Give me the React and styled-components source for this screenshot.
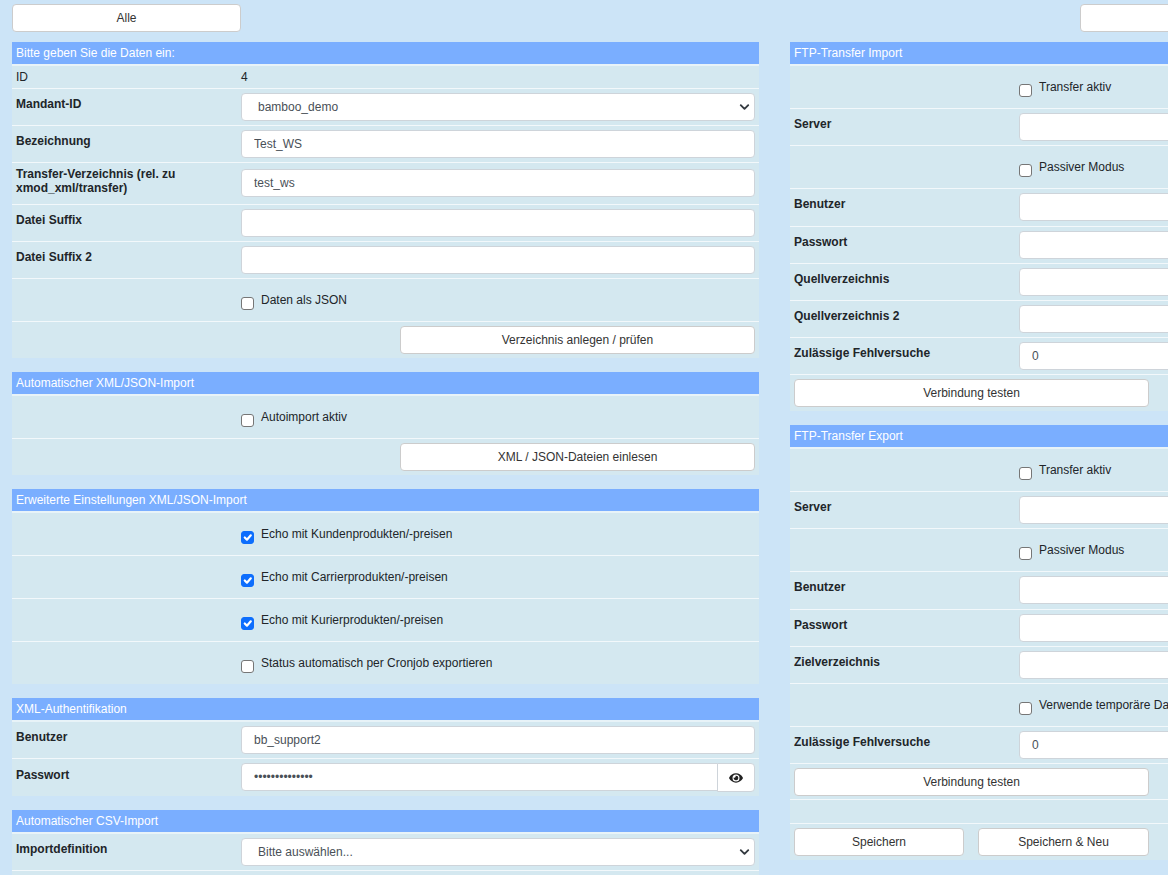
import React from "react";
import styled, { createGlobalStyle } from "styled-components";
import { FaEye } from "react-icons/fa";

const GlobalStyle = createGlobalStyle`
  html, body {
    margin: 0;
    height: 100%;
    overflow: hidden;
    background: #cce4f7;
  }
  * { box-sizing: border-box; }
  body {
    font-family: "Liberation Sans", Arial, sans-serif;
    font-size: 12px;
    color: #212529;
  }
`;

const Page = styled.div`
  width: 1549px;
  padding: 4px 12px 0;
`;

const TopBar = styled.div`
  display: flex;
  gap: 839px;
  margin-bottom: 10px;
`;

const Button = styled.button`
  height: 28px;
  width: ${(p) => p.$width || "355px"};
  background: #fff;
  border: 1px solid #ccc;
  border-radius: 4px;
  font: inherit;
  color: #333;
  padding: 0;
`;

const Columns = styled.div`
  display: grid;
  grid-template-columns: 747px 747px;
  gap: 31px;
  align-items: start;
`;

const Section = styled.section`
  margin-bottom: 14px;
`;

const SectionTitle = styled.div`
  height: 24px;
  line-height: 22px;
  padding-left: 4px;
  background: #7aaeff;
  border-bottom: 2px solid #e8f3f8;
  color: #fff;
  background-clip: padding-box;
`;

const Row = styled.div`
  display: grid;
  grid-template-columns: 229px 514px;
  background: #d4e8f0;
  border-bottom: 1px solid #f2f8fb;
  height: ${(p) => p.$height || "37px"};
  padding-top: ${(p) => p.$top ?? 4}px;

  &:last-child {
    border-bottom: 0;
  }
`;

const Label = styled.div`
  padding: ${(p) => p.$top ?? 4}px 4px 0;
  font-weight: ${(p) => (p.$plain ? 400 : 700)};
  line-height: 14px;
  color: #212529;
`;

const PlainValue = styled.div`
  padding-top: 4px;
  line-height: 14px;
`;

const TextInput = styled.input`
  width: 100%;
  height: 28px;
  margin-top: ${(p) => p.$offset || 0}px;
  padding: 0 12px;
  background: #fff;
  border: 1px solid #ced4da;
  border-radius: 4px;
  font: inherit;
  color: #495057;
  outline: none;
`;

const Select = styled.select`
  appearance: none;
  width: 100%;
  height: 28px;
  padding: 0 12px 0 16px;
  border: 1px solid #ced4da;
  border-radius: 4px;
  font: inherit;
  color: #495057;
  background: #fff url("data:image/svg+xml,%3csvg xmlns='http://www.w3.org/2000/svg' viewBox='0 0 16 16'%3e%3cpath fill='none' stroke='%23343a40' stroke-linecap='round' stroke-linejoin='round' stroke-width='3' d='m2 5 6 6 6-6'/%3e%3c/svg%3e") no-repeat right 4px center / 11px 10px;
`;

const InputGroup = styled.div`
  display: flex;
  ${TextInput} {
    border-radius: 4px 0 0 4px;
  }
`;

const EyeButton = styled.button`
  flex: 0 0 38px;
  height: 29px;
  margin-left: -1px;
  display: flex;
  align-items: center;
  justify-content: center;
  background: #fff;
  border: 1px solid #ced4da;
  border-radius: 0 4px 4px 0;
  color: #222;
  font-size: 14px;
  padding: 0;
`;

const CheckLine = styled.label`
  grid-column: 2;
  display: flex;
  align-items: flex-start;
  gap: 7px;
  white-space: nowrap;
  line-height: 14px;
`;

const Check = styled.input.attrs({ type: "checkbox" })`
  appearance: none;
  flex: none;
  width: 13px;
  height: 13px;
  margin: 4px 0 0;
  background: #fff;
  border: 1px solid #767676;
  border-radius: 3px;

  &:checked {
    border-color: #0d6efd;
    background: #0d6efd url("data:image/svg+xml,%3csvg xmlns='http://www.w3.org/2000/svg' viewBox='0 0 20 20'%3e%3cpath fill='none' stroke='%23fff' stroke-linecap='round' stroke-linejoin='round' stroke-width='4' d='m5 10 4 4 7-8'/%3e%3c/svg%3e") center / 100% 100% no-repeat;
  }
`;

const ActionRow = styled.div`
  display: flex;
  justify-content: ${(p) => p.$justify || "flex-start"};
  gap: 14px;
  background: #d4e8f0;
  border-bottom: 1px solid #f2f8fb;
  padding: 4px ${(p) => (p.$justify ? "4px" : "0")} 0 4px;
  height: 36px;

  &:last-child {
    border-bottom: 0;
  }
`;

const EmptyRow = styled.div`
  height: 24px;
  background: #d4e8f0;
  border-bottom: 1px solid #f2f8fb;
`;

function Field({ label, value = "", type = "text", height }) {
  return (
    <Row $height={height}>
      <Label>{label}</Label>
      <TextInput type={type} defaultValue={value} />
    </Row>
  );
}

function Dropdown({ label, value }) {
  return (
    <Row>
      <Label>{label}</Label>
      <Select defaultValue={value}>
        <option>{value}</option>
      </Select>
    </Row>
  );
}

function CheckRow({ text, checked, height = "43px" }) {
  return (
    <Row $height={height} $top={14}>
      <CheckLine>
        <Check defaultChecked={checked} />
        {text}
      </CheckLine>
    </Row>
  );
}

export default function App() {
  return (
    <Page>
      <GlobalStyle />
      <TopBar>
        <Button $width="229px">Alle</Button>
        <Button $width="229px" />
      </TopBar>
      <Columns>
        <div>
          <Section>
            <SectionTitle>Bitte geben Sie die Daten ein:</SectionTitle>
            <Row $height="23px" $top={0}>
              <Label $plain>ID</Label>
              <PlainValue>4</PlainValue>
            </Row>
            <Dropdown label="Mandant-ID" value="bamboo_demo" />
            <Field label="Bezeichnung" value="Test_WS" />
            <Row $height="42px" $top={0}>
              <Label>Transfer-Verzeichnis (rel. zu xmod_xml/transfer)</Label>
              <TextInput defaultValue="test_ws" $offset={6} />
            </Row>
            <Field label="Datei Suffix" />
            <Field label="Datei Suffix 2" />
            <CheckRow text="Daten als JSON" />
            <ActionRow $justify="flex-end">
              <Button>Verzeichnis anlegen / prüfen</Button>
            </ActionRow>
          </Section>
          <Section>
            <SectionTitle>Automatischer XML/JSON-Import</SectionTitle>
            <CheckRow text="Autoimport aktiv" />
            <ActionRow $justify="flex-end">
              <Button>XML / JSON-Dateien einlesen</Button>
            </ActionRow>
          </Section>
          <Section>
            <SectionTitle>Erweiterte Einstellungen XML/JSON-Import</SectionTitle>
            <CheckRow text="Echo mit Kundenprodukten/-preisen" checked />
            <CheckRow text="Echo mit Carrierprodukten/-preisen" checked />
            <CheckRow text="Echo mit Kurierprodukten/-preisen" checked />
            <CheckRow text="Status automatisch per Cronjob exportieren" height="42px" />
          </Section>
          <Section>
            <SectionTitle>XML-Authentifikation</SectionTitle>
            <Field label="Benutzer" value="bb_support2" />
            <Row>
              <Label $top={5}>Passwort</Label>
              <InputGroup>
                <TextInput type="password" defaultValue="bbsupport12345" />
                <EyeButton>
                  <FaEye />
                </EyeButton>
              </InputGroup>
            </Row>
          </Section>
          <Section>
            <SectionTitle>Automatischer CSV-Import</SectionTitle>
            <Dropdown label="Importdefinition" value="Bitte auswählen..." />
            <Row />
          </Section>
        </div>
        <div>
          <Section>
            <SectionTitle>FTP-Transfer Import</SectionTitle>
            <CheckRow text="Transfer aktiv" />
            <Field label="Server" />
            <CheckRow text="Passiver Modus" />
            <Field label="Benutzer" height="38px" />
            <Field label="Passwort" />
            <Field label="Quellverzeichnis" />
            <Field label="Quellverzeichnis 2" />
            <Field label="Zulässige Fehlversuche" value="0" />
            <ActionRow>
              <Button>Verbindung testen</Button>
            </ActionRow>
          </Section>
          <Section>
            <SectionTitle>FTP-Transfer Export</SectionTitle>
            <CheckRow text="Transfer aktiv" />
            <Field label="Server" />
            <CheckRow text="Passiver Modus" />
            <Field label="Benutzer" height="38px" />
            <Field label="Passwort" />
            <Field label="Zielverzeichnis" />
            <CheckRow text="Verwende temporäre Dateien" />
            <Field label="Zulässige Fehlversuche" value="0" />
            <ActionRow>
              <Button>Verbindung testen</Button>
            </ActionRow>
            <EmptyRow />
            <ActionRow>
              <Button $width="170px">Speichern</Button>
              <Button $width="171px">Speichern &amp; Neu</Button>
            </ActionRow>
          </Section>
        </div>
      </Columns>
    </Page>
  );
}
